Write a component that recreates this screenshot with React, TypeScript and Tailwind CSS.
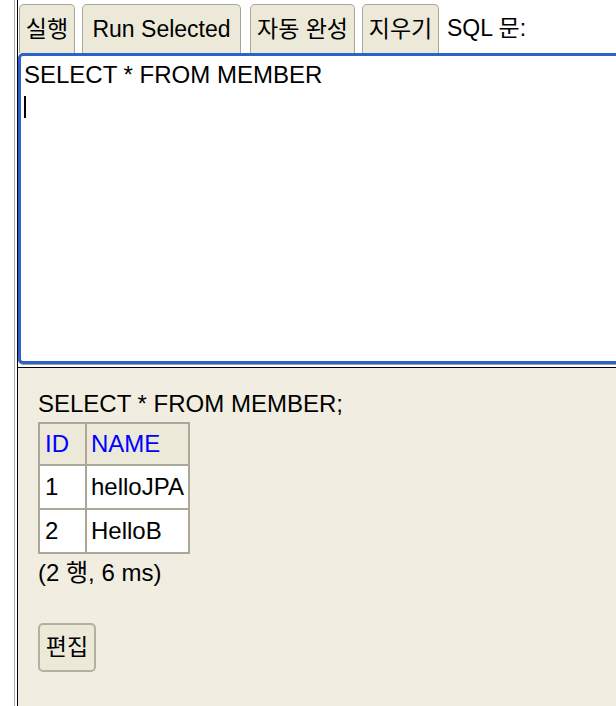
import React from "react";

const FONT = { fontFamily: '"Liberation Sans", "Noto Sans CJK KR", Arial, sans-serif' };

function TabButton({ label, w, ml }: { label: string; w: string; ml: string }) {
  return (
    <div
      className={`${w} ${ml} h-[49px] shrink-0 border border-b-0 border-[#a9a698] rounded-t-[5px] bg-[#ece9d8] text-[23px] leading-[27px] text-black flex items-center justify-center whitespace-nowrap`}
    >
      {label}
    </div>
  );
}

export default function App() {
  return (
    <div className="w-[616px] h-[706px] overflow-hidden flex bg-white text-black" style={FONT}>
      <div className="w-[14px] shrink-0" />
      <div className="w-px shrink-0 bg-[#a8a8a8]" />
      <div className="w-[2px] shrink-0" />
      <div className="w-px shrink-0 bg-black" />
      <div className="flex-1 min-w-0 flex flex-col">
        <div className="h-[367px] shrink-0 pt-[4px] overflow-hidden">
          <div className="flex items-center h-[49px]">
            <TabButton label="실행" w="w-[56px]" ml="ml-px" />
            <TabButton label="Run Selected" w="w-[159px]" ml="ml-[7px]" />
            <TabButton label="자동 완성" w="w-[105px]" ml="ml-[9px]" />
            <TabButton label="지우기" w="w-[77px]" ml="ml-[7px]" />
            <span className="ml-[8px] text-[23px] leading-[27px] whitespace-nowrap">SQL 문:</span>
          </div>
          <div className="w-[720px] h-[311px] border-[3px] border-[#2d62c9] rounded-[5px] bg-white shadow-[0_1px_0_#a0a0a0] pt-[5px] pl-[3px] text-[24px] leading-[28px]">
            <div className="whitespace-nowrap">SELECT * FROM MEMBER</div>
            <div className="h-[28px] pt-[7px]">
              <div className="w-[2px] h-[22px] bg-black" />
            </div>
          </div>
        </div>
        <div className="h-px shrink-0 bg-black" />
        <div className="flex-1 bg-[#f1eee1] pl-[20px] pt-[22px] text-[24px] leading-[28px]">
          <div className="whitespace-nowrap">SELECT * FROM MEMBER;</div>
          <table className="border-collapse mt-[4px]">
            <thead>
              <tr className="bg-[#ece9d8]">
                <th className="border-2 border-[#aca899] w-[47px] px-[5px] py-[6px] text-left font-normal text-[#0000ff]">ID</th>
                <th className="border-2 border-[#aca899] px-[4px] py-[6px] text-left font-normal text-[#0000ff]">NAME</th>
              </tr>
            </thead>
            <tbody>
              <tr className="bg-white">
                <td className="border-2 border-[#aca899] px-[5px] py-[7px]">1</td>
                <td className="border-2 border-[#aca899] px-[4px] py-[7px]">helloJPA</td>
              </tr>
              <tr className="bg-white">
                <td className="border-2 border-[#aca899] px-[5px] py-[7px]">2</td>
                <td className="border-2 border-[#aca899] px-[4px] py-[7px]">HelloB</td>
              </tr>
            </tbody>
          </table>
          <div className="mt-[5px] whitespace-nowrap">(2 행, 6 ms)</div>
          <div className="mt-[36px] w-[58px] h-[49px] border-2 border-[#b3b0a2] rounded-[5px] bg-[#ece9d8] flex items-center justify-center text-[23px] leading-[27px]">
            편집
          </div>
        </div>
      </div>
    </div>
  );
}
